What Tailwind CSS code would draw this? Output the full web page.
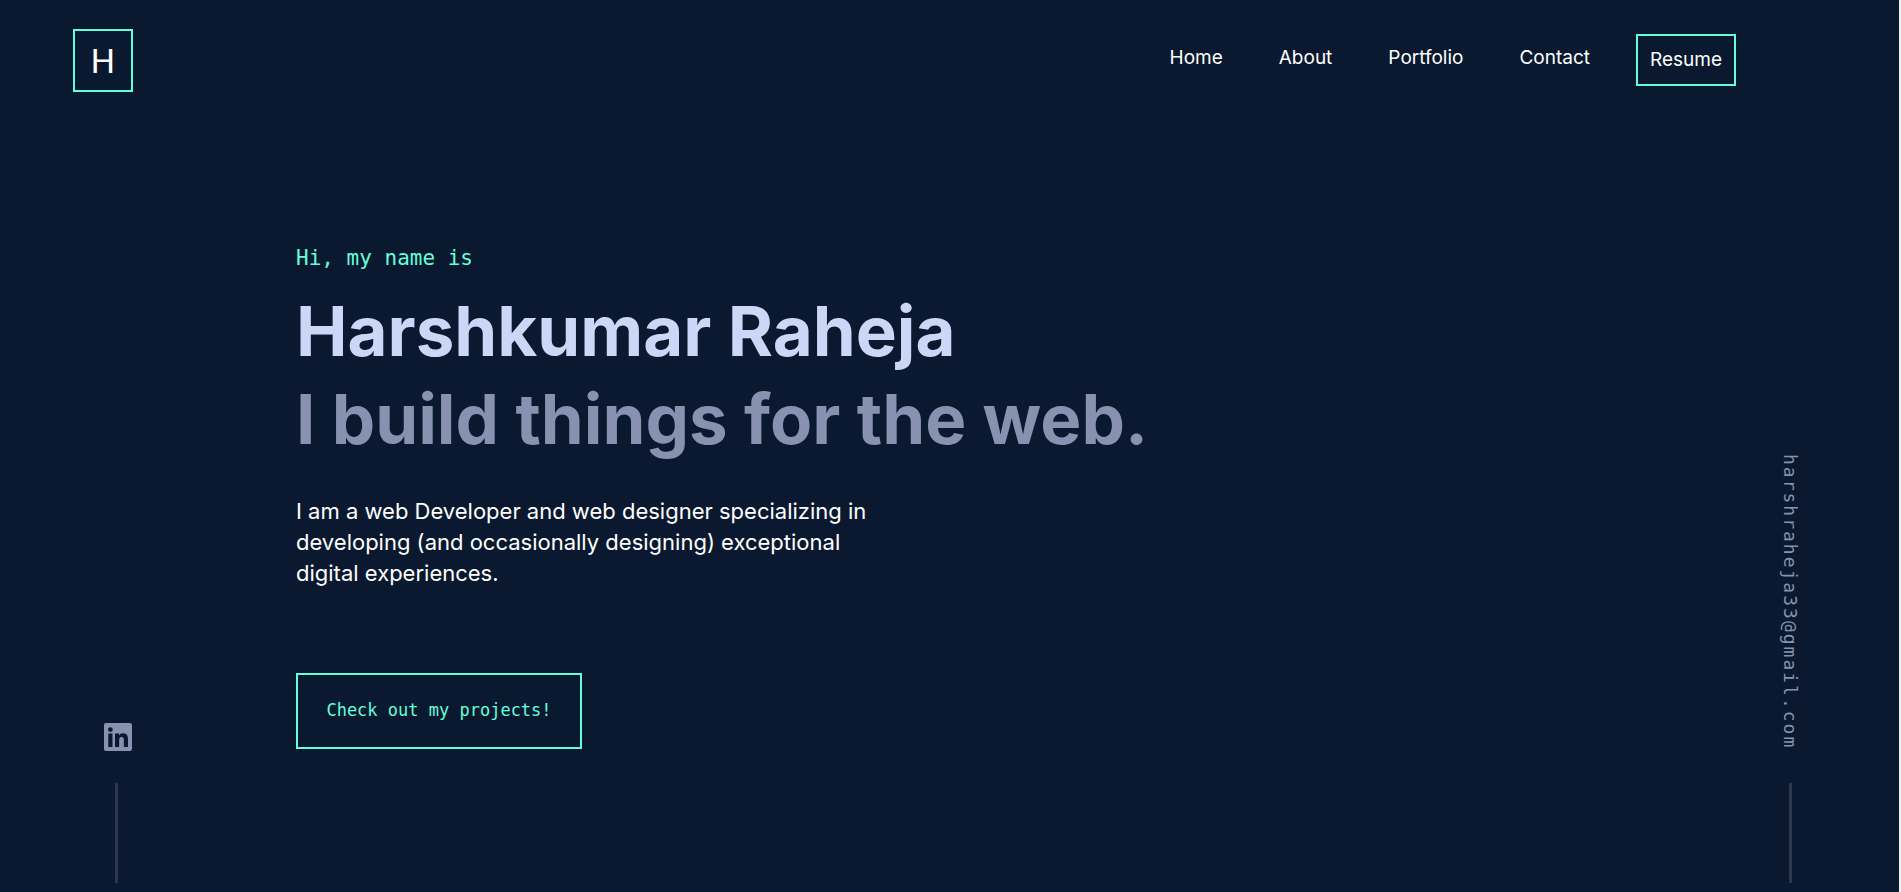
<!DOCTYPE html>
<html lang="en">
<head>
<meta charset="utf-8">
<meta name="viewport" content="width=device-width, initial-scale=1">
<title>Harshkumar Raheja</title>
<script src="https://cdn.jsdelivr.net/npm/@tailwindcss/browser@4"></script>
</head>
<body class="flex min-h-screen flex-col border-r-2 border-r-[#f1f1f1] bg-[#0a192f] font-['Inter',sans-serif] text-white">
  <header class="flex items-start justify-between pt-[29px] pr-[163px] pl-[73px]">
    <a href="#home" class="flex h-[63px] w-15 items-center justify-center border-2 border-[#64ffda] font-['Roboto',sans-serif] text-[34px] leading-none">H</a>
    <nav aria-label="Main" class="flex items-start gap-14 pt-[5px] text-[19px] leading-6">
      <a href="#home" class="pt-3">Home</a>
      <a href="#about" class="pt-3">About</a>
      <a href="#portfolio" class="pt-3">Portfolio</a>
      <a href="#contact" class="pt-3">Contact</a>
      <a href="#resume" class="-ml-2.5 flex h-13 items-center border-2 border-[#64ffda] px-3">Resume</a>
    </nav>
  </header>

  <div class="flex grow items-stretch justify-between">
    <aside class="flex w-74 flex-col items-start justify-end gap-8 pb-[9px] pl-26">
      <a href="#linkedin" aria-label="LinkedIn" class="text-[#8892b0]">
        <svg class="size-7" viewBox="0 0 28 28" fill="currentColor" aria-hidden="true"><path fill-rule="evenodd" d="M2 0h24a2 2 0 0 1 2 2v24a2 2 0 0 1-2 2H2a2 2 0 0 1-2-2V2a2 2 0 0 1 2-2ZM4.300 10.600h4.150v13.400H4.300ZM6.400 4.200a2.400 2.400 0 1 0 0 4.800a2.400 2.400 0 0 0 0-4.800ZM11 10.600v13.400h4.150v-6.600c0-1.750.35-3.450 2.500-3.450c2.150 0 2.200 2 2.200 3.550v6.500H24v-7.350c0-3.600-.8-6.400-5-6.400c-2 0-3.350 1.100-3.900 2.150H15v-1.800Z"/></svg>
      </a>
      <span class="ml-[11px] h-25 w-[3px] bg-[#2a374d]"></span>
    </aside>

    <main class="grow pt-38">
      <p class="font-['DejaVu_Sans_Mono',monospace] text-[21px] leading-7 text-[#64ffda]">Hi, my name is</p>
      <h1 class="mt-[15px] text-[69px] leading-[88px] font-bold text-[#ccd6f6]">Harshkumar Raheja</h1>
      <h2 class="text-[69px] leading-[88px] font-bold text-[#8892b0]">I build things for the web.</h2>
      <p class="mt-[33px] max-w-[600px] text-[22px] leading-[31px]">I am a web Developer and web designer specializing in developing (and occasionally designing) exceptional digital experiences.</p>
      <button type="button" class="mt-21 h-19 w-[286px] border-2 border-[#64ffda] font-['DejaVu_Sans_Mono',monospace] text-[17px] text-[#64ffda]">Check out my projects!</button>
    </main>

    <aside class="flex flex-col items-center justify-end gap-[34px] pr-[95px] pb-[9px]">
      <a href="mailto:harshraheja33@gmail.com" class="font-['DejaVu_Sans_Mono',monospace] text-[18px] leading-7 tracking-[2px] text-[#8892b0] [writing-mode:vertical-rl]">harshraheja33@gmail.com</a>
      <span class="h-25 w-[3px] bg-[#2a374d]"></span>
    </aside>
  </div>
</body>
</html>
